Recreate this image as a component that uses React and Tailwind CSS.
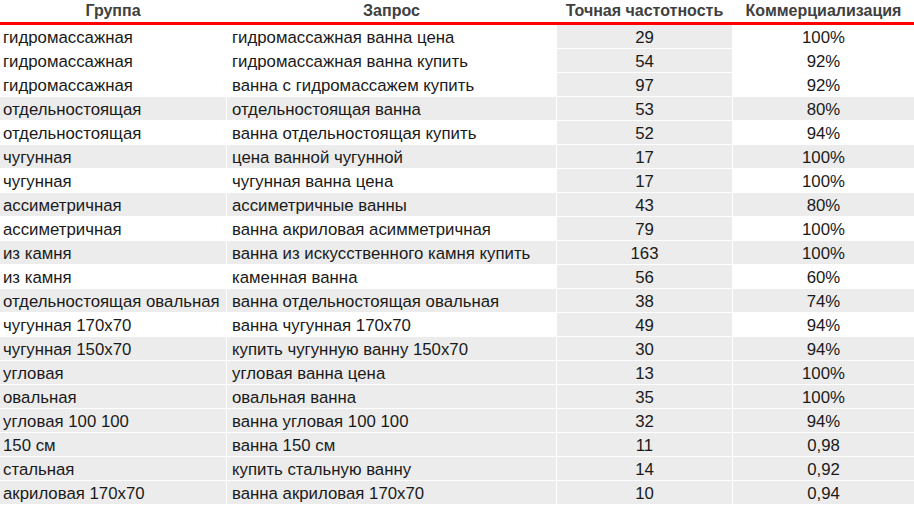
import React from "react";

const rows = [
  ["гидромассажная", "гидромассажная ванна цена", "29", "100%", false],
  ["гидромассажная", "гидромассажная ванна купить", "54", "92%", false],
  ["гидромассажная", "ванна с гидромассажем купить", "97", "92%", false],
  ["отдельностоящая", "отдельностоящая ванна", "53", "80%", true],
  ["отдельностоящая", "ванна отдельностоящая купить", "52", "94%", false],
  ["чугунная", "цена ванной чугунной", "17", "100%", true],
  ["чугунная", "чугунная ванна цена", "17", "100%", false],
  ["ассиметричная", "ассиметричные ванны", "43", "80%", true],
  ["ассиметричная", "ванна акриловая асимметричная", "79", "100%", false],
  ["из камня", "ванна из искусственного камня купить", "163", "100%", true],
  ["из камня", "каменная ванна", "56", "60%", false],
  ["отдельностоящая овальная", "ванна отдельностоящая овальная", "38", "74%", true],
  ["чугунная 170х70", "ванна чугунная 170х70", "49", "94%", false],
  ["чугунная 150х70", "купить чугунную ванну 150х70", "30", "94%", true],
  ["угловая", "угловая ванна цена", "13", "100%", true],
  ["овальная", "овальная ванна", "35", "100%", true],
  ["угловая 100 100", "ванна угловая 100 100", "32", "94%", true],
  ["150 см", "ванна 150 см", "11", "0,98", true],
  ["стальная", "купить стальную ванну", "14", "0,92", true],
  ["акриловая 170х70", "ванна акриловая 170х70", "10", "0,94", true],
];

export default function App() {
  return (
    <div className="w-[914px] h-[505px] overflow-hidden bg-white font-['Liberation_Sans',Arial,sans-serif]">
      <div className="grid grid-cols-[226px_329px_175px_181px] gap-x-px h-[22px] text-[16px] font-bold text-[#404040] leading-[22px]">
        <div className="text-center">Группа</div>
        <div className="text-center">Запрос</div>
        <div className="text-center">Точная частотность</div>
        <div className="text-center">Коммерциализация</div>
      </div>
      <div className="h-[3px] bg-[#ff0000]" />
      <div className="grid grid-cols-[226px_329px_175px_181px] gap-px auto-rows-[23px] text-[16.8px] text-[#1a1a1a] leading-[23px]">
        {rows.map((r, i) => (
          <React.Fragment key={i}>
            <div className={`pl-[3px] whitespace-nowrap pt-[1px] ${r[4] ? "bg-[#ececec]" : "bg-white"}`}>{r[0]}</div>
            <div className={`pl-[5px] whitespace-nowrap pt-[1px] ${r[4] ? "bg-[#ececec]" : "bg-white"}`}>{r[1]}</div>
            <div className="text-center bg-[#ececec] pt-[1px]">{r[2]}</div>
            <div className={`text-center pt-[1px] ${r[4] ? "bg-[#ececec]" : "bg-white"}`}>{r[3]}</div>
          </React.Fragment>
        ))}
      </div>
    </div>
  );
}
